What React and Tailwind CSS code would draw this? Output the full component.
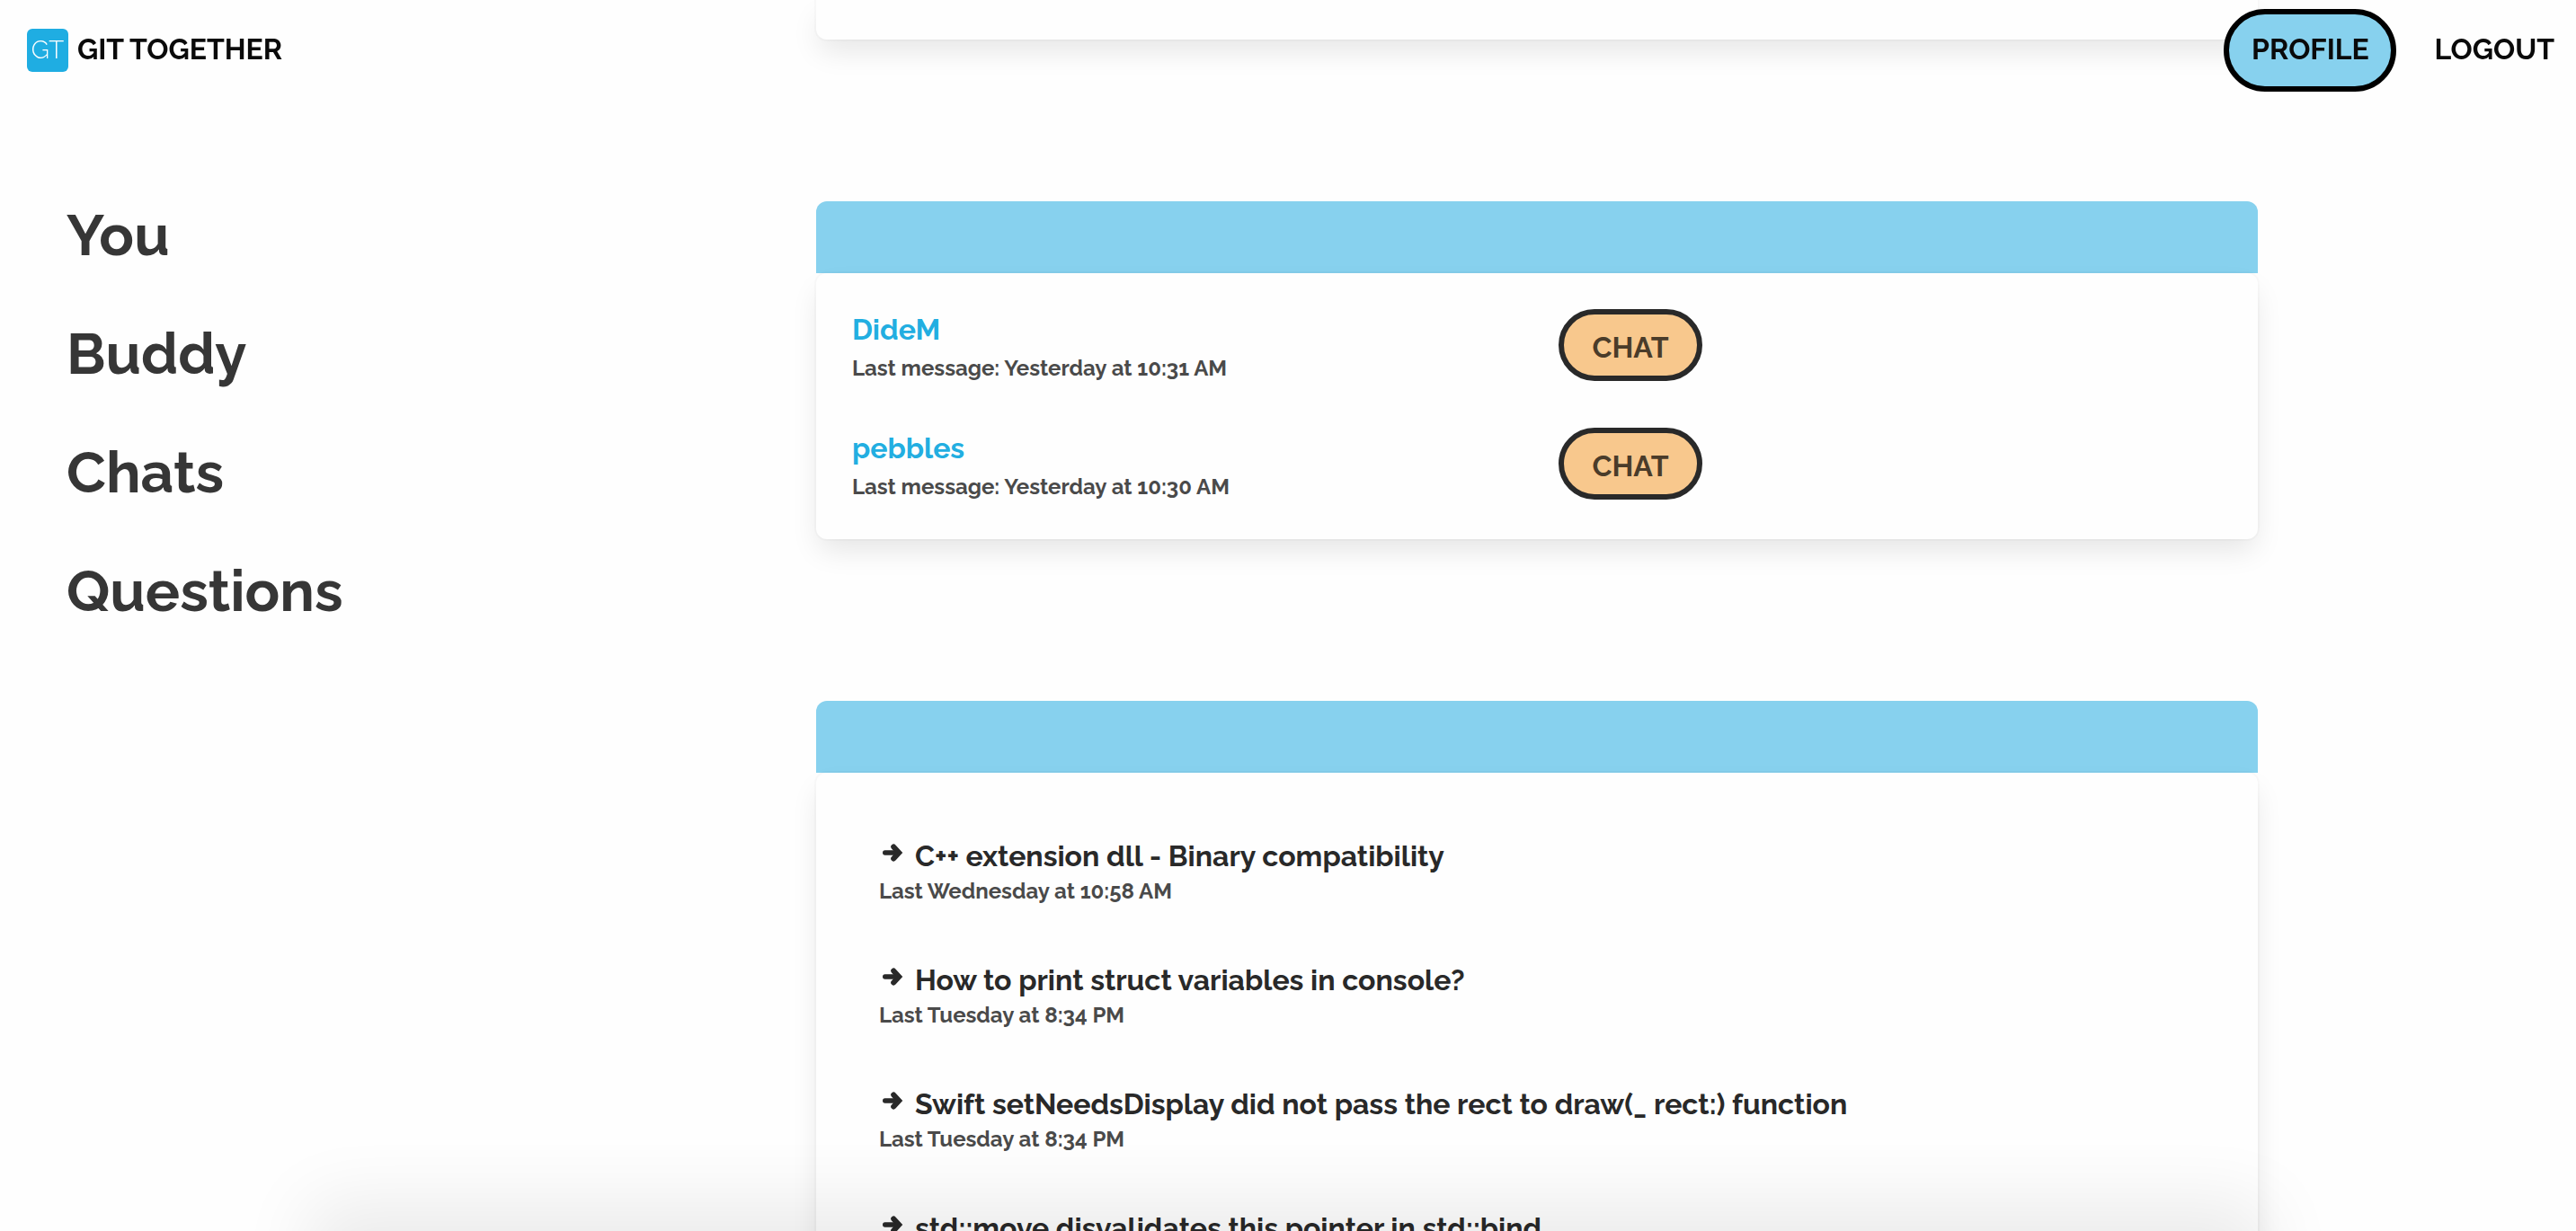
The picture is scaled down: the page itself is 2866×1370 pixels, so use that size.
const font = "font-['Raleway','Lato',sans-serif]";

const sections = ["You", "Buddy", "Chats", "Questions"];

const chats = [
  { name: "DideM", last: "Yesterday at 10:31 AM" },
  { name: "pebbles", last: "Yesterday at 10:30 AM" },
];

const questions = [
  { title: "C++ extension dll - Binary compatibility", date: "Last Wednesday at 10:58 AM" },
  { title: "How to print struct variables in console?", date: "Last Tuesday at 8:34 PM" },
  { title: "Swift setNeedsDisplay did not pass the rect to draw(_ rect:) function", date: "Last Tuesday at 8:34 PM" },
  { title: "std::move disvalidates this pointer in std::bind", date: "Last Tuesday at 8:34 PM" },
];

function Logo() {
  return (
    <span className="flex h-12 w-[46px] items-center justify-center rounded-md bg-[#1fade2] text-[28px] leading-none font-light text-white">
      GT
    </span>
  );
}

function Navbar() {
  return (
    <nav className="fixed inset-x-0 top-0 z-10 flex h-28 items-center justify-between pr-6 pl-[30px] text-[32px] leading-9 font-bold text-[#0a0a0a]">
      <a href="#home" className="flex items-center gap-[10px]">
        <Logo />
        <span className="pb-0.5">GIT TOGETHER</span>
      </a>
      <div className="flex items-center gap-[42px]">
        <a
          href="#profile"
          className="flex h-[92px] w-48 items-center justify-center rounded-full border-6 border-black bg-[#87d1ee] pb-0.5"
        >
          PROFILE
        </a>
        <a href="#logout" className="pb-0.5">LOGOUT</a>
      </div>
    </nav>
  );
}

function Panel({ children }) {
  return (
    <section>
      <div className="h-20 rounded-t-xl bg-[#87d1ee]" />
      <div className="rounded-xl bg-[#fefefe] shadow-[0_16px_32px_-4px_rgba(10,10,10,0.1),0_0_0_2px_rgba(10,10,10,0.02)]">
        {children}
      </div>
    </section>
  );
}

function Arrow() {
  return (
    <svg viewBox="0 0 24 20" className="h-5 w-6" fill="none" stroke="currentColor" strokeLinecap="round" aria-hidden="true">
      <path d="M2.7 10H17" strokeWidth="5.4" />
      <path d="M12.2 3.4L18.2 10L12.2 16.6" strokeWidth="6" strokeLinejoin="miter" />
      <path d="M12 6L17 10L12 14Z" fill="currentColor" stroke="none" />
    </svg>
  );
}

export default function App() {
  return (
    <div className={`${font} h-screen overflow-hidden bg-[#fefefe] text-[#292929]`}>
      <Navbar />
      <div className="grid grid-cols-[908fr_1604fr_354fr]">
        <aside className="pt-[226px] pl-[74px]">
          <ul className="flex flex-col gap-[60px] text-[64px] leading-[72px] font-bold text-[#363636]">
            {sections.map((s) => (
              <li key={s}>
                <a href={`#${s}`}>{s}</a>
              </li>
            ))}
          </ul>
        </aside>
        <main className="flex flex-col gap-[180px]">
          <div className="h-11 rounded-b-xl bg-[#fefefe] shadow-[0_16px_32px_-4px_rgba(10,10,10,0.1),0_0_0_2px_rgba(10,10,10,0.02)]" />
          <Panel>
            <ul className="flex flex-col gap-[46px] px-10 pt-10 pb-[38px]">
              {chats.map((c) => (
                <li key={c.name} className="grid grid-cols-[786fr_738fr] items-start">
                  <div>
                    <a href="#user" className="block text-[32px] leading-[46px] font-bold text-[#22aee1]">
                      {c.name}
                    </a>
                    <p className="text-[24px] leading-10 font-bold text-[#4a4a4a]">Last message: {c.last}</p>
                  </div>
                  <button className="h-20 w-40 rounded-full border-6 border-[#292929] bg-[#f8c88d] pt-1.5 text-[32px] leading-9 font-bold text-[#4a3c2a]">
                    CHAT
                  </button>
                </li>
              ))}
            </ul>
          </Panel>
          <Panel>
            <ul className="flex flex-col gap-[60px] px-[70px] py-[70px]">
              {questions.map((q) => (
                <li key={q.title}>
                  <h2 className="text-[32px] leading-[46px] font-bold">
                    <a href="#question" className="flex items-start gap-3 pl-1">
                      <span className="pt-[9px]">
                        <Arrow />
                      </span>
                      {q.title}
                    </a>
                  </h2>
                  <p className="text-[24px] leading-8 font-bold text-[#4a4a4a]">{q.date}</p>
                </li>
              ))}
            </ul>
          </Panel>
        </main>
      </div>
      <div className="fixed inset-x-[12%] top-full h-60 rounded-xl shadow-[0_-32px_80px_rgba(10,10,10,0.08)]" />
    </div>
  );
}
